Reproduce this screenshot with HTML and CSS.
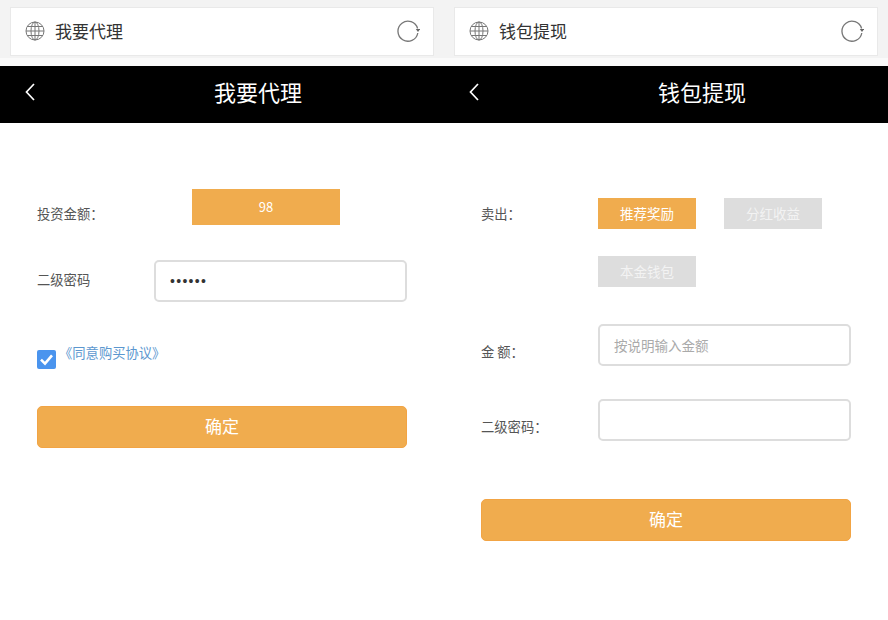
FILE: index.html
```html
<!DOCTYPE html>
<html lang="zh">
<head>
<meta charset="utf-8">
<title>我要代理 / 钱包提现</title>
<link rel="stylesheet" href="styles.css">
</head>
<body>
<div class="screens">
  <section class="panel">
    <div class="chrome">
      <div class="addr">
        <svg class="globe" viewBox="0 0 20 20"><g fill="none" stroke="#777" stroke-width="1"><circle cx="10" cy="10" r="9"/><ellipse cx="10" cy="10" rx="4" ry="9"/><path d="M10 1v18M1 10h18M2.2 5.5h15.6M2.2 14.5h15.6"/></g></svg>
        <span class="addr-title">我要代理</span>
        <svg class="reload" viewBox="0 0 24 24"><path d="M21.8 14A10 10 0 1 1 21.6 9.5" fill="none" stroke="#777" stroke-width="1.3"/><path d="M19.8 10h4.4l-2.2 3z" fill="#666"/></svg>
      </div>
    </div>
    <header class="nav">
      <svg class="back" viewBox="0 0 10 18"><path d="M9 1 1.5 9 9 17" fill="none" stroke="#fff" stroke-width="1.7"/></svg>
      <h1 class="nav-title">我要代理</h1>
    </header>
    <form class="form form-left">
      <div class="row-amount">
        <label class="label label-amount">投资金额：</label>
        <div class="amount-box">98</div>
      </div>
      <div class="row-pass">
        <label class="label">二级密码</label>
        <input class="field field-pass" type="password" value="123456">
      </div>
      <div class="row-agree">
        <span class="check"><svg viewBox="0 0 19 19"><path d="M4 9.6 8 13.6l7-8.2" fill="none" stroke="#fff" stroke-width="2.6"/></svg></span>
        <a class="agree-link">《同意购买协议》</a>
      </div>
      <button class="submit submit-left" type="button">确定</button>
    </form>
  </section>

  <section class="panel">
    <div class="chrome">
      <div class="addr">
        <svg class="globe" viewBox="0 0 20 20"><g fill="none" stroke="#777" stroke-width="1"><circle cx="10" cy="10" r="9"/><ellipse cx="10" cy="10" rx="4" ry="9"/><path d="M10 1v18M1 10h18M2.2 5.5h15.6M2.2 14.5h15.6"/></g></svg>
        <span class="addr-title">钱包提现</span>
        <svg class="reload" viewBox="0 0 24 24"><path d="M21.8 14A10 10 0 1 1 21.6 9.5" fill="none" stroke="#777" stroke-width="1.3"/><path d="M19.8 10h4.4l-2.2 3z" fill="#666"/></svg>
      </div>
    </div>
    <header class="nav">
      <svg class="back" viewBox="0 0 10 18"><path d="M9 1 1.5 9 9 17" fill="none" stroke="#fff" stroke-width="1.7"/></svg>
      <h1 class="nav-title">钱包提现</h1>
    </header>
    <form class="form form-right">
      <div class="row-sell">
        <label class="label label-sell">卖出：</label>
        <div class="chips">
          <span class="chip chip-on">推荐奖励</span>
          <span class="chip">分红收益</span>
          <span class="chip">本金钱包</span>
        </div>
      </div>
      <div class="row-field row-money">
        <label class="label label-low">金 额：</label>
        <input class="field field-wide" type="text" placeholder="按说明输入金额">
      </div>
      <div class="row-field row-second">
        <label class="label label-low">二级密码：</label>
        <input class="field field-wide" type="password">
      </div>
      <button class="submit submit-right" type="button">确定</button>
    </form>
  </section>
</div>
</body>
</html>
```
FILE: styles.css
```css
* { box-sizing: border-box; }
html, body { margin: 0; height: 100%; background: #fff; overflow: hidden; }
body { font-family: "Noto Sans CJK SC", "Liberation Sans", sans-serif; color: #555; }
.screens { display: grid; grid-template-columns: 444px 444px; width: 888px; height: 620px; }
.panel { display: flex; flex-direction: column; }

.chrome { height: 66px; padding: 7px 10px 0; background: linear-gradient(#f3f3f3 58px, #fafafa 58px); }
.addr { display: flex; align-items: center; height: 49px; padding: 0 13px 0 14px; background: #fff; border: 1px solid #e9e9e9; }
.globe { width: 20px; height: 20px; flex: none; margin-top: -1px; }
.addr-title { margin-left: 10px; padding-bottom: 3px; font-size: 17px; color: #333; line-height: 1; }
.reload { width: 24px; height: 24px; margin-left: auto; margin-top: -1px; }

.nav { display: flex; align-items: center; gap: 179px; height: 57px; padding-left: 25px; background: #000; }
.back { width: 10px; height: 18px; flex: none; margin-top: -6px; }
.nav-title { margin: 0; padding-bottom: 8px; font-size: 22px; font-weight: 400; color: #fff; line-height: 1; }

.form { padding: 0 37px; flex: 1; }
.label { font-size: 13.3px; line-height: 18px; color: #555; white-space: nowrap; }

.row-amount { display: flex; margin-top: 66px; }
.label-amount { width: 155px; padding-top: 16px; }
.amount-box { width: 148px; height: 36px; padding-top: 8px; background: #f0ac4e; color: #fff; font-size: 13px; line-height: 20px; text-align: center; }

.row-pass { display: flex; align-items: center; margin-top: 35px; }
.row-pass .label { width: 117px; padding-bottom: 2px; }
.field { display: block; height: 42px; padding: 0 14px; background: #fff; border: 2px solid #ddd; border-radius: 5px; outline: none; font: 13.5px "Noto Sans CJK SC", "Liberation Sans", sans-serif; color: #333; }
.field::placeholder { color: #aaa; opacity: 1; }
.field-pass { width: 253px; font: 14px "Liberation Sans", sans-serif; letter-spacing: 1.3px; }
.field-wide { width: 253px; }

.row-agree { display: flex; align-items: flex-start; margin-top: 48px; }
.check { display: block; width: 19px; height: 19px; background: #4a94ee; border-radius: 2px; }
.check svg { display: block; width: 19px; height: 19px; }
.agree-link { margin-top: -6px; margin-left: 3px; font-size: 13.3px; line-height: 18px; color: #5c97cf; }

.submit { display: block; width: 370px; height: 42px; padding: 0 0 4px; background: #f0ac4e; border: 1px solid #f2a444; border-radius: 5px; color: #fff; font: 17px/1 "Noto Sans CJK SC", "Liberation Sans", sans-serif; }
.submit-left { margin-top: 37px; }
.submit-right { margin-top: 58px; }

.row-sell { display: flex; margin-top: 75px; }
.label-sell { width: 117px; padding-top: 7px; }
.chips { display: flex; flex-wrap: wrap; width: 253px; gap: 27px 28px; }
.chip { width: 98px; height: 31px; background: #ddd; color: #f3f3f3; font-size: 13.5px; line-height: 31px; text-align: center; }
.chip-on { background: #f0ac4e; color: #fff; }

.row-field { display: flex; }
.row-money { margin-top: 37px; }
.row-second { margin-top: 33px; }
.label-low { width: 117px; padding-top: 19px; }
```
